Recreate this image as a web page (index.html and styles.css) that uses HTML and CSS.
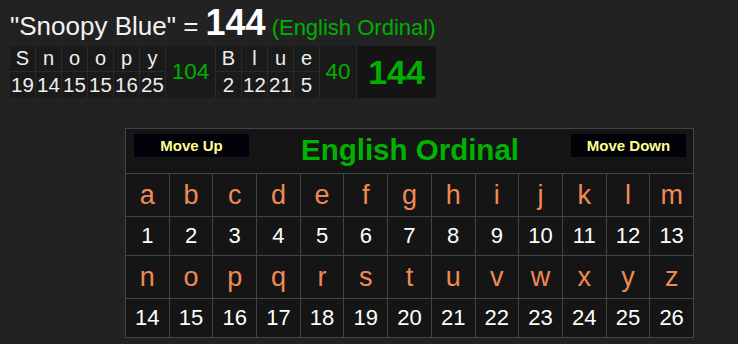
FILE: index.html
```html
<!DOCTYPE html>
<html>
<head>
<meta charset="utf-8">
<link rel="stylesheet" href="styles.css">
</head>
<body>
<div class="page">
  <div class="headline">
    <span class="phrase">"Snoopy Blue" = </span><span class="value">144</span><span class="cipher">(English Ordinal)</span>
  </div>
  <table class="breakdown">
    <tr class="bl">
      <td class="l">S</td><td class="l">n</td><td class="l">o</td><td class="l">o</td><td class="l">p</td><td class="l">y</td>
      <td class="sum w104" rowspan="2">104</td>
      <td class="l">B</td><td class="l">l</td><td class="l">u</td><td class="l">e</td>
      <td class="sum w40" rowspan="2">40</td>
      <td class="total" rowspan="2">144</td>
    </tr>
    <tr class="bn">
      <td class="n">19</td><td class="n">14</td><td class="n">15</td><td class="n">15</td><td class="n">16</td><td class="n">25</td>
      <td class="n">2</td><td class="n">12</td><td class="n">21</td><td class="n">5</td>
    </tr>
  </table>
  <div class="chart-wrap">
    <table class="chart">
      <tr>
        <td class="head" colspan="13">
          <div class="head-row">
            <button class="btn">Move Up</button>
            <span class="title">English Ordinal</span>
            <button class="btn">Move Down</button>
          </div>
        </td>
      </tr>
      <tr class="letters">
        <td>a</td><td>b</td><td>c</td><td>d</td><td>e</td><td>f</td><td>g</td><td>h</td><td>i</td><td>j</td><td>k</td><td>l</td><td>m</td>
      </tr>
      <tr class="nums">
        <td>1</td><td>2</td><td>3</td><td>4</td><td>5</td><td>6</td><td>7</td><td>8</td><td>9</td><td>10</td><td>11</td><td>12</td><td>13</td>
      </tr>
      <tr class="letters">
        <td>n</td><td>o</td><td>p</td><td>q</td><td>r</td><td>s</td><td>t</td><td>u</td><td>v</td><td>w</td><td>x</td><td>y</td><td>z</td>
      </tr>
      <tr class="nums">
        <td>14</td><td>15</td><td>16</td><td>17</td><td>18</td><td>19</td><td>20</td><td>21</td><td>22</td><td>23</td><td>24</td><td>25</td><td>26</td>
      </tr>
    </table>
  </div>
</div>
</body>
</html>
```
FILE: styles.css
```css
html, body {
  margin: 0;
  padding: 0;
  background: #222222;
}
body {
  font-family: "Liberation Sans", Arial, sans-serif;
  color: #ffffff;
}
.page {
  padding: 5px 0 0 10px;
}
.headline {
  display: flex;
  align-items: baseline;
  height: 35px;
  line-height: 35px;
  white-space: pre;
}
.phrase {
  font-size: 26px;
  color: #f2f2f2;
}
.value {
  font-size: 36px;
  font-weight: bold;
  color: #ffffff;
  margin-right: 6px;
}
.cipher {
  font-size: 22px;
  color: #00b000;
}
.breakdown {
  margin-top: 6px;
  border-collapse: collapse;
  border-style: hidden;
  background: #1a1a1a;
}
.breakdown td {
  border: 1px solid #2a2a2a;
  padding: 0;
  text-align: center;
  color: #eeeeee;
  width: 25px;
}
.breakdown tr.bl td {
  height: 25px;
}
.breakdown tr.bn td {
  height: 26px;
}
.breakdown td.l {
  font-size: 20px;
}
.breakdown td.n {
  font-size: 20.5px;
}
.breakdown td.sum {
  color: #00b000;
  font-size: 22.5px;
}
.breakdown td.w104 {
  width: 49px;
}
.breakdown td.w40 {
  width: 36px;
}
.breakdown td.total {
  width: 79px;
  background: #141414;
  color: #00b000;
  font-size: 34px;
  font-weight: bold;
}
.chart-wrap {
  padding: 30px 0 0 115px;
}
.chart {
  border-collapse: collapse;
  table-layout: fixed;
  width: 569px;
  background: #151515;
}
.chart td {
  border: 1px solid #444444;
  text-align: center;
  padding: 0;
}
.chart td.head {
  height: 44px;
  vertical-align: top;
}
.head-row {
  display: flex;
  justify-content: space-between;
  align-items: flex-start;
  padding: 5px 7px 0 8px;
}
.btn {
  width: 115px;
  height: 23px;
  background: #02020a;
  border: none;
  color: #ffff8c;
  font-family: "Liberation Sans", Arial, sans-serif;
  font-weight: bold;
  font-size: 15px;
  padding: 0;
}
.title {
  color: #00b300;
  font-size: 29.5px;
  font-weight: bold;
  line-height: 34px;
  margin-top: -1px;
}
.letters td {
  height: 42px;
  color: #f08a55;
  font-size: 27px;
}
.nums td {
  height: 38px;
  color: #ffffff;
  font-size: 22px;
}
```
